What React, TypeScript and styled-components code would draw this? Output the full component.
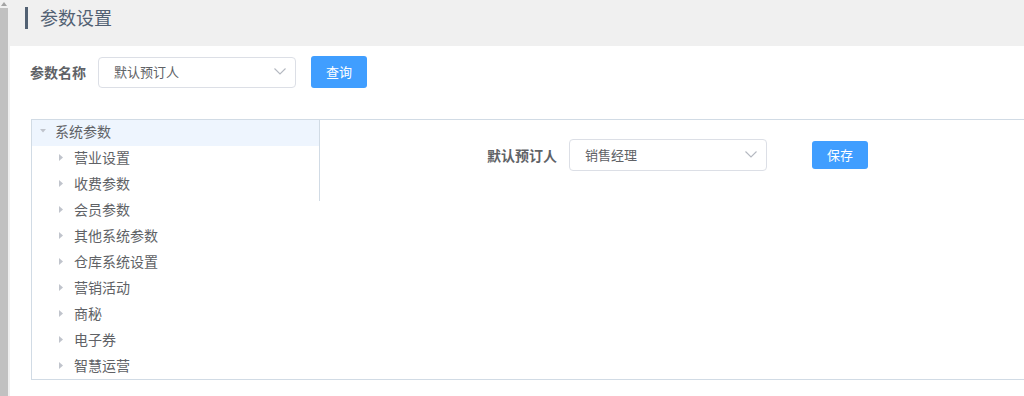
import { FC } from "react";
import styled, { createGlobalStyle } from 'styled-components';

const GlobalStyle = createGlobalStyle`
html, body {
  margin: 0;
  padding: 0;
  background: #fff;
  font-family: "Noto Sans CJK SC", "Liberation Sans", sans-serif;
  overflow: hidden;
}
`;

const Page = styled.div`
display: flex;
height: 396px;
`;

const ScrollTrack = styled.div`
width: 8px;
background: #c1c1c1;
display: flex;
flex-direction: column;
border-right: 2px solid #f0f0f0;
`;

const ScrollArrow = styled.div`
height: 8px;
background: #f0f0f0;
display: flex;
align-items: center;
justify-content: center;
`;

const Main = styled.div`
flex: 1;
min-width: 0;
display: flex;
flex-direction: column;
`;

const Header = styled.div`
height: 46px;
box-sizing: border-box;
background: #f0f0f0;
padding: 7px 0 0 15px;
display: flex;
align-items: flex-start;
gap: 12px;
`;

const TitleBar = styled.span`
width: 3px;
height: 22px;
background: #526173;
`;

const Title = styled.h1`
margin: 0;
font-size: 18px;
font-weight: 400;
line-height: 20px;
color: #526173;
`;

const SearchRow = styled.div`
display: flex;
align-items: center;
padding: 10px 0 0 20px;
height: 32px;
`;

const Label = styled.span`
font-size: 14px;
font-weight: 700;
color: #606266;
margin-right: 12px;
padding-bottom: 1px;
white-space: nowrap;
`;

const Select = styled.div<{ $h: number }>`
width: 198px;
height: ${p => p.$h}px;
box-sizing: border-box;
border: 1px solid #dcdfe6;
border-radius: 4px;
display: flex;
align-items: center;
justify-content: space-between;
padding: 0 9px 1px 15px;
font-size: 13px;
color: #606266;
background: #fff;
`;

const Button = styled.button<{ $h: number; $ml: number }>`
width: 56px;
height: ${p => p.$h}px;
margin-left: ${p => p.$ml}px;
border: none;
border-radius: 3px;
background: #409eff;
color: #fff;
font-family: inherit;
font-size: 13px;
padding: 0 0 1px;
cursor: pointer;
`;

const Panel = styled.div`
margin: 31px -10px 0 21px;
height: 261px;
box-sizing: border-box;
border: 1px solid #d1dbe5;
display: flex;
align-items: flex-start;
`;

const TreeColumn = styled.div`
width: 287px;
height: 81px;
border-right: 1px solid #d1dbe5;
flex-shrink: 0;
`;

const TreeRow = styled.div<{ $level: number; $active?: boolean }>`
height: 26px;
box-sizing: border-box;
padding-bottom: 4px;
display: flex;
align-items: center;
padding-left: ${p => (p.$level === 0 ? 8 : 27)}px;
background: ${p => (p.$active ? '#eef5fe' : 'transparent')};
font-size: 14px;
color: #606266;
white-space: nowrap;
`;

const Caret = styled.span`
width: 15px;
display: flex;
align-items: center;
`;

const FormRow = styled.div`
display: flex;
align-items: center;
padding: 19px 0 0 167px;
`;

const Chevron: FC = () => (
  <svg width="12" height="7" viewBox="0 0 12 7">
    <path d="M0.5 0.5 L6 6 L11.5 0.5" fill="none" stroke="#b4b8c0" strokeWidth="1.1" />
  </svg>
);

const children = ['营业设置', '收费参数', '会员参数', '其他系统参数', '仓库系统设置', '营销活动', '商秘', '电子券', '智慧运营'];

const App: FC = () => {
  return (
    <Page>
      <GlobalStyle />
      <ScrollTrack>
        <ScrollArrow>
          <svg width="6" height="4" viewBox="0 0 6 4">
            <path d="M0 4 L3 0 L6 4 Z" fill="#a3a3a3" />
          </svg>
        </ScrollArrow>
      </ScrollTrack>
      <Main>
        <Header>
          <TitleBar />
          <Title>参数设置</Title>
        </Header>
        <SearchRow>
          <Label>参数名称</Label>
          <Select $h={31}>
            <span>默认预订人</span>
            <Chevron />
          </Select>
          <Button $h={32} $ml={15}>查询</Button>
        </SearchRow>
        <Panel>
          <TreeColumn>
            <TreeRow $level={0} $active>
              <Caret>
                <svg width="6" height="4" viewBox="0 0 6 4">
                  <path d="M0 0 L6 0 L3 3.5 Z" fill="#c0c4cc" />
                </svg>
              </Caret>
              系统参数
            </TreeRow>
            {children.map(name => (
              <TreeRow key={name} $level={1}>
                <Caret>
                  <svg width="4" height="7" viewBox="0 0 4 7">
                    <path d="M0 0 L4 3.5 L0 7 Z" fill="#c0c4cc" />
                  </svg>
                </Caret>
                {name}
              </TreeRow>
            ))}
          </TreeColumn>
          <FormRow>
            <Label>默认预订人</Label>
            <Select $h={32}>
              <span>销售经理</span>
              <Chevron />
            </Select>
            <Button $h={28} $ml={45}>保存</Button>
          </FormRow>
        </Panel>
      </Main>
    </Page>
  );
};

export default App;
